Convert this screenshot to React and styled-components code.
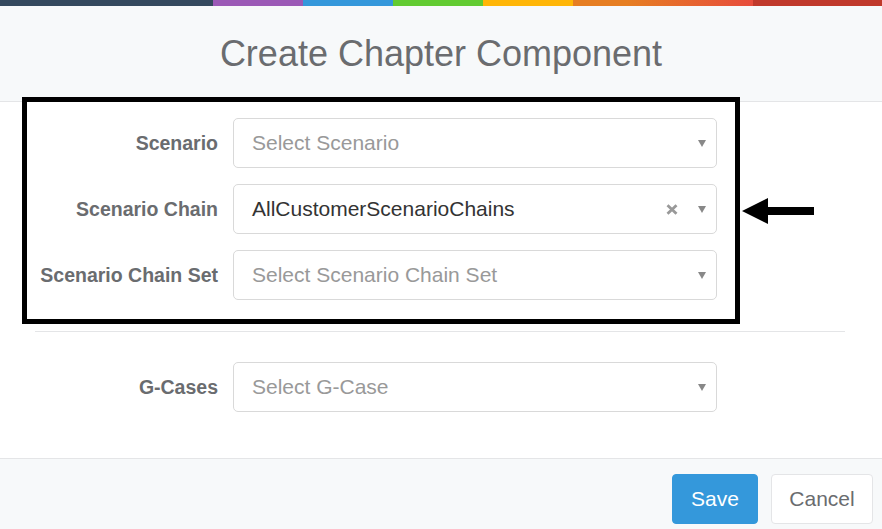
import styled, { createGlobalStyle } from "styled-components";

const GlobalStyle = createGlobalStyle`
  html, body {
    margin: 0;
    padding: 0;
    background: #ffffff;
    font-family: "Liberation Sans", Arial, sans-serif;
  }
`;

const Modal = styled.div`
  position: relative;
  width: 882px;
  height: 529px;
  overflow: hidden;
  background: #fff;
  display: flex;
  flex-direction: column;
`;

const ColorBar = styled.div`
  height: 6px;
  display: flex;
  span {
    height: 100%;
  }
`;

const Header = styled.div`
  height: 95px;
  background: #f7f9fa;
  border-bottom: 1px solid #e4e5e7;
  display: flex;
  align-items: center;
  justify-content: center;
  h1 {
    margin: 0;
    font-weight: 400;
    font-size: 36px;
    color: #6a6c6f;
  }
`;

const Body = styled.div`
  flex: 1;
  padding-top: 16px;
`;

const Group = styled.div`
  display: flex;
  flex-direction: column;
  gap: 16px;
`;

const Row = styled.div`
  display: flex;
  align-items: center;
  gap: 15px;
  label {
    width: 218px;
    text-align: right;
    font-weight: 700;
    font-size: 19.5px;
    color: #6a6c6f;
  }
`;

const Select = styled.div`
  width: 484px;
  height: 50px;
  box-sizing: border-box;
  border: 1px solid #d9d9d9;
  border-radius: 5px;
  display: flex;
  align-items: center;
  padding: 0 10px 0 18px;
  font-size: 21px;
  color: ${({ $filled }) => ($filled ? "#333" : "#999")};
  .value {
    flex: 1;
  }
`;

const Clear = styled.svg`
  margin-right: 20px;
`;

const Caret = styled.span`
  width: 0;
  height: 0;
  margin-top: 1px;
  border-left: 4.5px solid transparent;
  border-right: 4.5px solid transparent;
  border-top: 7px solid #888;
`;

const Divider = styled.hr`
  margin: 31px 37px 30px 35px;
  border: 0;
  border-top: 1px solid #e4e5e7;
`;

const Footer = styled.div`
  height: 71px;
  background: #f7f9fa;
  border-top: 1px solid #e4e5e7;
  display: flex;
  justify-content: flex-end;
  align-items: flex-start;
  padding: 15px 9px 0 0;
  gap: 13px;
  box-sizing: border-box;
`;

const Button = styled.button`
  height: 50px;
  padding: 0;
  font-family: "Liberation Sans", Arial, sans-serif;
  font-size: 21px;
  border-radius: 4px;
  border: 1px solid ${({ $primary }) => ($primary ? "#3498db" : "#e4e5e7")};
  background: ${({ $primary }) => ($primary ? "#3498db" : "#fff")};
  color: ${({ $primary }) => ($primary ? "#fff" : "#6a6c6f")};
  width: ${({ $primary }) => ($primary ? "86px" : "102px")};
`;

const Highlight = styled.div`
  position: absolute;
  left: 22px;
  top: 97px;
  width: 718px;
  height: 227px;
  box-sizing: border-box;
  border: 5px solid #000;
  pointer-events: none;
`;

const Arrow = styled.svg`
  position: absolute;
  left: 741px;
  top: 196px;
`;

const bars = [
  ["#34495e", 213],
  ["#9b59b6", 90],
  ["#3498db", 90],
  ["#62cb31", 90],
  ["#ffb606", 90],
  ["linear-gradient(to right, #e67e22 30%, #e74c3c)", 180],
  ["#c0392b", 129],
];

const fields = [
  { label: "Scenario", placeholder: "Select Scenario" },
  { label: "Scenario Chain", value: "AllCustomerScenarioChains" },
  { label: "Scenario Chain Set", placeholder: "Select Scenario Chain Set" },
];

const Field = ({ label, value, placeholder }) => (
  <Row>
    <label>{label}</label>
    <Select $filled={!!value}>
      <span className="value">{value || placeholder}</span>
      {value && (
        <Clear width="12" height="11" viewBox="0 0 12 11">
          <path d="M1.5 1.3 L10.5 9.7 M10.5 1.3 L1.5 9.7" stroke="#999" strokeWidth="2.8" />
        </Clear>
      )}
      <Caret />
    </Select>
  </Row>
);

export default function App() {
  return (
    <>
      <GlobalStyle />
      <Modal>
        <ColorBar>
          {bars.map(([c, w], i) => (
            <span key={i} style={{ background: c, width: w }} />
          ))}
        </ColorBar>
        <Header>
          <h1>Create Chapter Component</h1>
        </Header>
        <Body>
          <Group>
            {fields.map((f) => (
              <Field key={f.label} {...f} />
            ))}
          </Group>
          <Divider />
          <Field label="G-Cases" placeholder="Select G-Case" />
        </Body>
        <Footer>
          <Button $primary>Save</Button>
          <Button>Cancel</Button>
        </Footer>
        <Highlight />
        <Arrow width="74" height="30" viewBox="0 0 74 30">
          <polygon points="1,15 27,2 27,11 73,11 73,19 27,19 27,28" fill="#000" />
        </Arrow>
      </Modal>
    </>
  );
}
